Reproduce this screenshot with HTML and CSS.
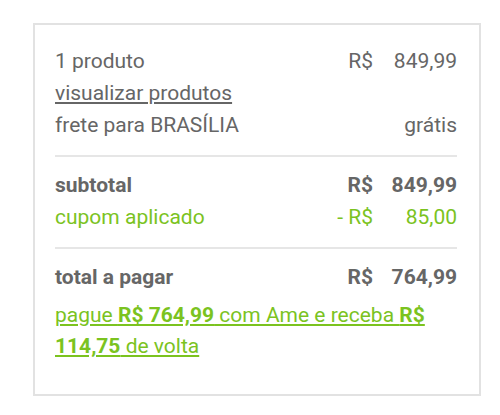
FILE: index.html
```html
<!DOCTYPE html>
<html lang="pt-BR">
<head>
    <meta charset="utf-8">
    <title>Resumo do pedido</title>
    <link rel="stylesheet" href="styles.css">
</head>
<body>
    <div class="summary">
        <ul class="summary-group">
            <li class="row">
                <span class="label">1 produto</span>
                <span class="cur">R$</span>
                <span class="val">849,99</span>
            </li>
            <li class="row">
                <a href="#" class="link">visualizar produtos</a>
            </li>
            <li class="row">
                <span class="label">frete para BRASÍLIA</span>
                <span class="val val-wide">grátis</span>
            </li>
        </ul>
        <ul class="summary-group">
            <li class="row bold">
                <span class="label">subtotal</span>
                <span class="cur">R$</span>
                <span class="val">849,99</span>
            </li>
            <li class="row green">
                <span class="label">cupom aplicado</span>
                <span class="cur">- R$</span>
                <span class="val">85,00</span>
            </li>
        </ul>
        <ul class="summary-group last">
            <li class="row bold">
                <span class="label">total a pagar</span>
                <span class="cur">R$</span>
                <span class="val">764,99</span>
            </li>
        </ul>
        <p class="ame"><a href="#">pague <strong>R$ 764,99</strong> com Ame e receba <strong>R$ 114,75</strong> de volta</a></p>
    </div>
</body>
</html>
```

FILE: styles.css
```css
@charset 'utf-8';
html,body,p,ul,li { margin:0;padding:0; }
body { background-color:#fff; font-family:Roboto, 'Liberation Sans', sans-serif; color:#666; }
ul, li { list-style:none; }
a { color:inherit; }

.summary { width:448px; margin:23px 0 0 33px; padding:20px 22px 32px 20px; border:2px solid #e2e2e2; box-sizing:border-box; }
.summary-group { padding-bottom:14px; margin-bottom:12px; border-bottom:2px solid #e6e6e6; }
.summary-group.last { padding-bottom:0; margin-bottom:7px; border-bottom:0; }
.row { display:grid; grid-template-columns:1fr auto 84px; align-items:center; height:32px; font-size:21px; line-height:32px; }
.row .cur { text-align:right; }
.row .val { text-align:right; }
.row .val-wide { grid-column:2 / 4; }
.row .link { grid-column:1 / 4; justify-self:start; }
.row.bold { font-weight:bold; }
.row.green { color:#7bc31f; }
.ame { font-size:21px; line-height:31px; color:#7bc31f; }
.ame strong { font-weight:bold; }
```
